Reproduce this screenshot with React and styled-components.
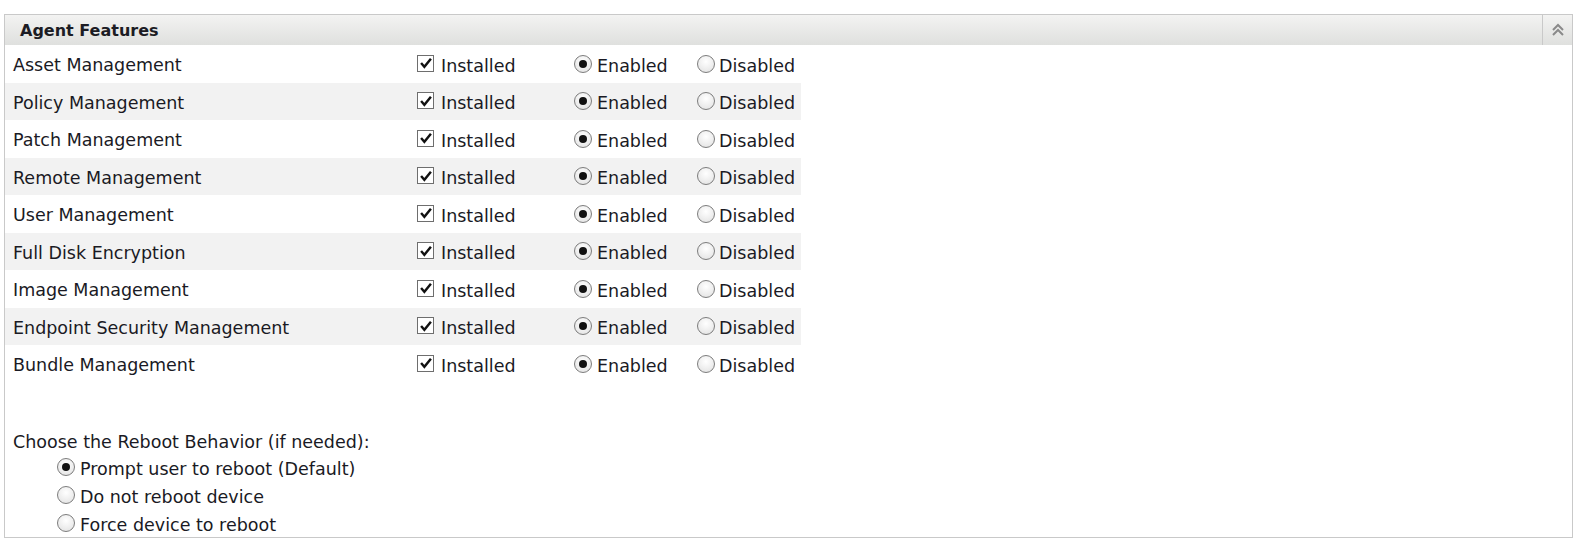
import React from "react";
import styled, { createGlobalStyle } from "styled-components";

const GlobalStyle = createGlobalStyle`
  body {
    margin: 0;
    background: #ffffff;
    font-family: "DejaVu Sans", "Liberation Sans", sans-serif;
    color: #1a1a24;
  }
`;

const Page = styled.div`
  padding: 14px 12px 0 4px;
`;

const Panel = styled.section`
  border: 1px solid #c9c9c9;
  background: #fff;
`;

const PanelHeader = styled.header`
  height: 30px;
  display: flex;
  align-items: stretch;
  background: linear-gradient(#f3f3f2, #dfe0de);
`;

const PanelTitle = styled.h2`
  flex: 1;
  margin: 0;
  padding-left: 15px;
  display: flex;
  align-items: center;
  font-size: 16px;
  font-weight: bold;
  color: #1c1c24;
`;

const CollapseBtn = styled.button`
  width: 30px;
  padding: 0;
  border: none;
  border-left: 1px solid #c9c9c9;
  background: transparent;
  display: flex;
  align-items: center;
  justify-content: center;
  cursor: pointer;
`;

const FeatureTable = styled.div`
  width: 796px;
  font-size: 17.5px;
`;

const FeatureRow = styled.div`
  display: grid;
  grid-template-columns: 408px 157px 123px 1fr;
  height: 37.5px;
  align-items: center;
  background: ${(p) => (p.$shaded ? "#f2f2f2" : "transparent")};
`;

const Label = styled.div`
  padding-left: 8px;
  padding-top: 3px;
`;

const Option = styled.label`
  display: flex;
  align-items: center;
  gap: ${(p) => p.$gap || 4}px;
  padding-left: ${(p) => p.$indent || 0}px;
  padding-top: 4px;
`;

const Box = styled.span`
  width: 15px;
  height: 15px;
  border: 1px solid #6e6e6e;
  background: #fff;
  display: inline-flex;
  align-items: center;
  justify-content: center;
  margin-top: -5px;
`;

const Radio = styled.span`
  width: 16px;
  height: 16px;
  border-radius: 50%;
  border: 1px solid #7c7c7c;
  background: radial-gradient(circle at 50% 35%, #ffffff, #e0e0e0);
  display: inline-flex;
  align-items: center;
  justify-content: center;
  margin-top: -4px;
  &::after {
    content: "";
    width: 8px;
    height: 8px;
    border-radius: 50%;
    background: ${(p) => (p.$checked ? "#111" : "transparent")};
  }
`;

const RebootSection = styled.div`
  padding: 49px 0 0 8px;
  font-size: 17.5px;
  display: flex;
  flex-direction: column;
  row-gap: 4px;
`;

const RebootTitle = styled.div`
  height: 20px;
  line-height: 20px;
  margin-bottom: 1px;
`;

const RebootOption = styled(Option)`
  height: 24px;
  padding-top: 0;
  padding-left: 44px;
`;

const features = [
  "Asset Management",
  "Policy Management",
  "Patch Management",
  "Remote Management",
  "User Management",
  "Full Disk Encryption",
  "Image Management",
  "Endpoint Security Management",
  "Bundle Management",
];

const rebootChoices = [
  { label: "Prompt user to reboot (Default)", checked: true },
  { label: "Do not reboot device", checked: false },
  { label: "Force device to reboot", checked: false },
];

const Check = () => (
  <svg width="12" height="12" viewBox="0 0 11 11">
    <path d="M1 5.5 L4 9 L10 1.5" fill="none" stroke="#111" strokeWidth="2.2" />
  </svg>
);

const DoubleUp = () => (
  <svg width="14" height="14" viewBox="0 0 14 14">
    <path d="M2 7 L7 2 L12 7 M2 12 L7 7 L12 12" fill="none" stroke="#8a8a8a" strokeWidth="2" />
  </svg>
);

const App = () => {
  return (
    <Page>
      <GlobalStyle />
      <Panel>
        <PanelHeader>
          <PanelTitle>Agent Features</PanelTitle>
          <CollapseBtn aria-label="collapse">
            <DoubleUp />
          </CollapseBtn>
        </PanelHeader>
        <FeatureTable>
          {features.map((name, i) => (
            <FeatureRow key={name} $shaded={i % 2 === 1}>
              <Label>{name}</Label>
              <Option $indent={4} $gap={7}>
                <Box>
                  <Check />
                </Box>
                Installed
              </Option>
              <Option $indent={4} $gap={5}>
                <Radio $checked />
                Enabled
              </Option>
              <Option $indent={4}>
                <Radio />
                Disabled
              </Option>
            </FeatureRow>
          ))}
        </FeatureTable>
        <RebootSection>
          <RebootTitle>Choose the Reboot Behavior (if needed):</RebootTitle>
          {rebootChoices.map((c) => (
            <RebootOption key={c.label} $gap={5}>
              <Radio $checked={c.checked} />
              {c.label}
            </RebootOption>
          ))}
        </RebootSection>
      </Panel>
    </Page>
  );
};

export default App;
